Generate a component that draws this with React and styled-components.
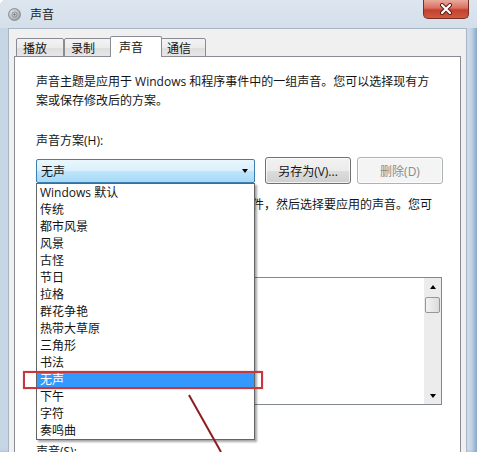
import styled, { createGlobalStyle } from 'styled-components';

const GlobalStyle = createGlobalStyle`
  body {
    margin: 0;
    font-family: 'Open Sans', 'Noto Sans CJK SC', sans-serif;
  }
`;

const Window = styled.div`
  position: relative;
  width: 477px;
  height: 452px;
  overflow: hidden;
  display: flex;
  flex-direction: column;
  background: linear-gradient(to right, #c6d5e4 0%, #d6e1ec 40%, #cbd9e8 100%);
  box-shadow: inset -4px 0 4px -1px #86a6c8;
  border-top-left-radius: 6px;
  font-size: 12px;
  color: #141414;
`;

const TitleBar = styled.div`
  flex-shrink: 0;
  height: 28px;
  display: flex;
  align-items: center;
  padding: 0 8px;
  background: linear-gradient(180deg, #dde6ef 0%, #d4dfea 100%);
`;

const Title = styled.span`
  margin-left: 9px;
  font-size: 12px;
  color: #1b1b1b;
`;

const CloseButton = styled.div`
  margin-left: auto;
  align-self: flex-start;
  width: 46px;
  height: 19px;
  box-sizing: border-box;
  display: flex;
  align-items: center;
  justify-content: center;
  border: 1px solid #7a2e26;
  border-top: none;
  border-radius: 0 0 5px 5px;
  background: linear-gradient(180deg, #e9aa9c 0%, #d9705f 45%, #c4412f 55%, #cf5a44 100%);
`;

const Client = styled.div`
  flex: 1;
  min-height: 0;
  margin: 0 10px 0 8px;
  border: 1px solid #a7b5c4;
  border-bottom: none;
  background: #f0f0f0;
  display: flex;
  flex-direction: column;
`;

const TabStrip = styled.div`
  flex-shrink: 0;
  display: flex;
  align-items: flex-end;
  padding: 7px 0 0 7px;
  margin-bottom: -1px;
  position: relative;
  z-index: 1;
`;

const Tab = styled.div`
  box-sizing: border-box;
  width: ${(p) => (p.$active ? p.$w + 4 : p.$w)}px;
  height: ${(p) => (p.$active ? 21 : 19)}px;
  margin: 0 ${(p) => (p.$active ? -2 : 0)}px;
  padding-left: ${(p) => (p.$active ? 8 : 6)}px;
  display: flex;
  align-items: center;
  border: 1px solid #898c95;
  border-bottom: ${(p) => (p.$active ? 'none' : '1px solid #898c95')};
  border-radius: 2px 2px 0 0;
  background: ${(p) =>
    p.$active ? '#ffffff' : 'linear-gradient(180deg, #f3f3f3 0%, #ebebeb 50%, #dedede 51%, #e6e6e6 100%)'};
  position: relative;
  z-index: ${(p) => (p.$active ? 2 : 1)};
  font-size: 12px;
`;

const Panel = styled.div`
  flex: 1;
  min-height: 0;
  margin: 0 5px;
  border: 1px solid #898c95;
  border-bottom: none;
  background: #fff;
  padding: 15px 0 0 21px;
`;

const Para = styled.div`
  line-height: 19px;
  white-space: nowrap;
`;

const Label = styled.div`
  line-height: 19px;
  margin-top: ${(p) => p.$mt}px;
  white-space: nowrap;
`;

const SchemeRow = styled.div`
  display: flex;
  align-items: center;
  height: 27px;
  margin-top: 7px;
`;

const ComboWrap = styled.div`
  position: relative;
  width: 219px;
  z-index: 5;
`;

const Combo = styled.div`
  box-sizing: border-box;
  height: 24px;
  display: flex;
  align-items: center;
  padding: 0 6px 0 4px;
  border: 1px solid #3c7fb1;
  border-radius: 2px;
  background: linear-gradient(180deg, #eaf6fd 0%, #d9f0fc 50%, #bee6fd 51%, #a7d9f5 100%);
  justify-content: space-between;
`;

const Arrow = styled.span`
  width: 0;
  height: 0;
  border-left: 3.5px solid transparent;
  border-right: 3.5px solid transparent;
  border-top: 4px solid #000;
  border-bottom: none;
  ${(p) => p.$up && 'border-top: none; border-bottom: 4px solid #000;'}
`;

const DropList = styled.div`
  position: absolute;
  top: 100%;
  left: 0;
  width: 219px;
  box-sizing: border-box;
  border: 1px solid #646464;
  background: #fff;
  box-shadow: 2px 2px 2px rgba(0, 0, 0, 0.35);
`;

const DropItem = styled.div`
  height: 17px;
  line-height: 17px;
  padding-left: 3px;
  white-space: nowrap;
  background: ${(p) => (p.$selected ? '#3399ff' : 'transparent')};
  color: ${(p) => (p.$selected ? '#fff' : '#141414')};
`;

const Button = styled.div`
  box-sizing: border-box;
  width: 86px;
  height: 27px;
  margin-left: ${(p) => p.$ml}px;
  display: flex;
  align-items: center;
  justify-content: center;
  border: 1px solid ${(p) => (p.$disabled ? '#adb2b5' : '#707070')};
  border-radius: 3px;
  background: ${(p) =>
    p.$disabled
      ? '#f4f4f4'
      : 'linear-gradient(180deg, #f2f2f2 0%, #ebebeb 50%, #dddddd 51%, #cfcfcf 100%)'};
  color: ${(p) => (p.$disabled ? '#8a8a8a' : '#141414')};
  box-shadow: inset 0 0 0 1px rgba(255, 255, 255, 0.7);
`;

const EventList = styled.div`
  box-sizing: border-box;
  width: 406px;
  height: 128px;
  margin-top: 6px;
  border: 1px solid #828790;
  display: flex;
  justify-content: flex-end;
`;

const ScrollBar = styled.div`
  width: 17px;
  display: flex;
  flex-direction: column;
  background: #ececec;
`;

const ScrollBtn = styled.div`
  height: 17px;
  display: flex;
  align-items: center;
  justify-content: center;
`;

const ScrollTrack = styled.div`
  flex: 1;
  padding: 2px 1px 0;
`;

const Thumb = styled.div`
  height: 14px;
  border: 1px solid #979797;
  border-radius: 2px;
  background: linear-gradient(to right, #f3f3f3, #dcdcdc);
`;

const Highlight = styled.div`
  position: absolute;
  left: 23px;
  top: 371px;
  width: 240px;
  height: 18px;
  box-sizing: border-box;
  border: 2px solid #c8363e;
  box-shadow: 0 0 1px rgba(200, 54, 62, 0.6);
  z-index: 10;
`;

const Pointer = styled.svg`
  position: absolute;
  left: 0;
  top: 0;
  z-index: 10;
`;

const schemes = [
  'Windows 默认',
  '传统',
  '都市风景',
  '风景',
  '古怪',
  '节日',
  '拉格',
  '群花争艳',
  '热带大草原',
  '三角形',
  '书法',
  '无声',
  '下午',
  '字符',
  '奏鸣曲',
];

const SpeakerIcon = () => (
  <svg width="13" height="13" viewBox="0 0 13 13">
    <defs>
      <radialGradient id="spk" cx="0.4" cy="0.4" r="0.7">
        <stop offset="0" stopColor="#f4f4f4" />
        <stop offset="1" stopColor="#8a8f96" />
      </radialGradient>
    </defs>
    <circle cx="6.5" cy="6.5" r="6" fill="url(#spk)" stroke="#7d838b" strokeWidth="0.8" />
    <circle cx="6.5" cy="6.5" r="2.6" fill="#c9cdd2" stroke="#6f757d" strokeWidth="0.7" />
    <circle cx="6.5" cy="6.5" r="1" fill="#5d636a" />
  </svg>
);

const CloseIcon = () => (
  <svg width="14" height="12" viewBox="0 0 14 12">
    <path d="M3 2 L11 10 M11 2 L3 10" stroke="#5a1b14" strokeWidth="4" strokeLinecap="round" />
    <path d="M3 2 L11 10 M11 2 L3 10" stroke="#fff" strokeWidth="2.2" strokeLinecap="round" />
  </svg>
);

const tabs = [
  { name: '播放', w: 48 },
  { name: '录制', w: 48 },
  { name: '声音', w: 48, active: true },
  { name: '通信', w: 46 },
];

const App = () => {
  return (
    <Window>
      <GlobalStyle />
      <TitleBar>
        <SpeakerIcon />
        <Title>声音</Title>
        <CloseButton>
          <CloseIcon />
        </CloseButton>
      </TitleBar>
      <Client>
        <TabStrip>
          {tabs.map((t) => (
            <Tab key={t.name} $w={t.w} $active={t.active}>
              {t.name}
            </Tab>
          ))}
        </TabStrip>
        <Panel>
          <Para>
            声音主题是应用于 Windows 和程序事件中的一组声音。您可以选择现有方
            <br />
            案或保存修改后的方案。
          </Para>
          <Label $mt={21}>声音方案(H):</Label>
          <SchemeRow>
            <ComboWrap>
              <Combo>
                <span>无声</span>
                <Arrow />
              </Combo>
              <DropList>
                {schemes.map((s) => (
                  <DropItem key={s} $selected={s === '无声'}>
                    {s}
                  </DropItem>
                ))}
              </DropList>
            </ComboWrap>
            <Button $ml={10}>另存为(V)...</Button>
            <Button $ml={6} $disabled>
              删除(D)
            </Button>
          </SchemeRow>
          <Label $mt={11}>
            要更改声音，请在以下列表中单击程序事件，然后选择要应用的声音。您可
            <br />
            以将更改另存为新的声音方案。
          </Label>
          <Label $mt={19}>程序事件(E):</Label>
          <EventList>
            <ScrollBar>
              <ScrollBtn>
                <Arrow $up />
              </ScrollBtn>
              <ScrollTrack>
                <Thumb />
              </ScrollTrack>
              <ScrollBtn>
                <Arrow />
              </ScrollBtn>
            </ScrollBar>
          </EventList>
          <Label $mt={37}>声音(S):</Label>
        </Panel>
      </Client>
      <Highlight />
      <Pointer width="477" height="452">
        <line x1="189" y1="395" x2="221" y2="452" stroke="#8e1c1f" strokeWidth="2" />
      </Pointer>
    </Window>
  );
};

export default App;
